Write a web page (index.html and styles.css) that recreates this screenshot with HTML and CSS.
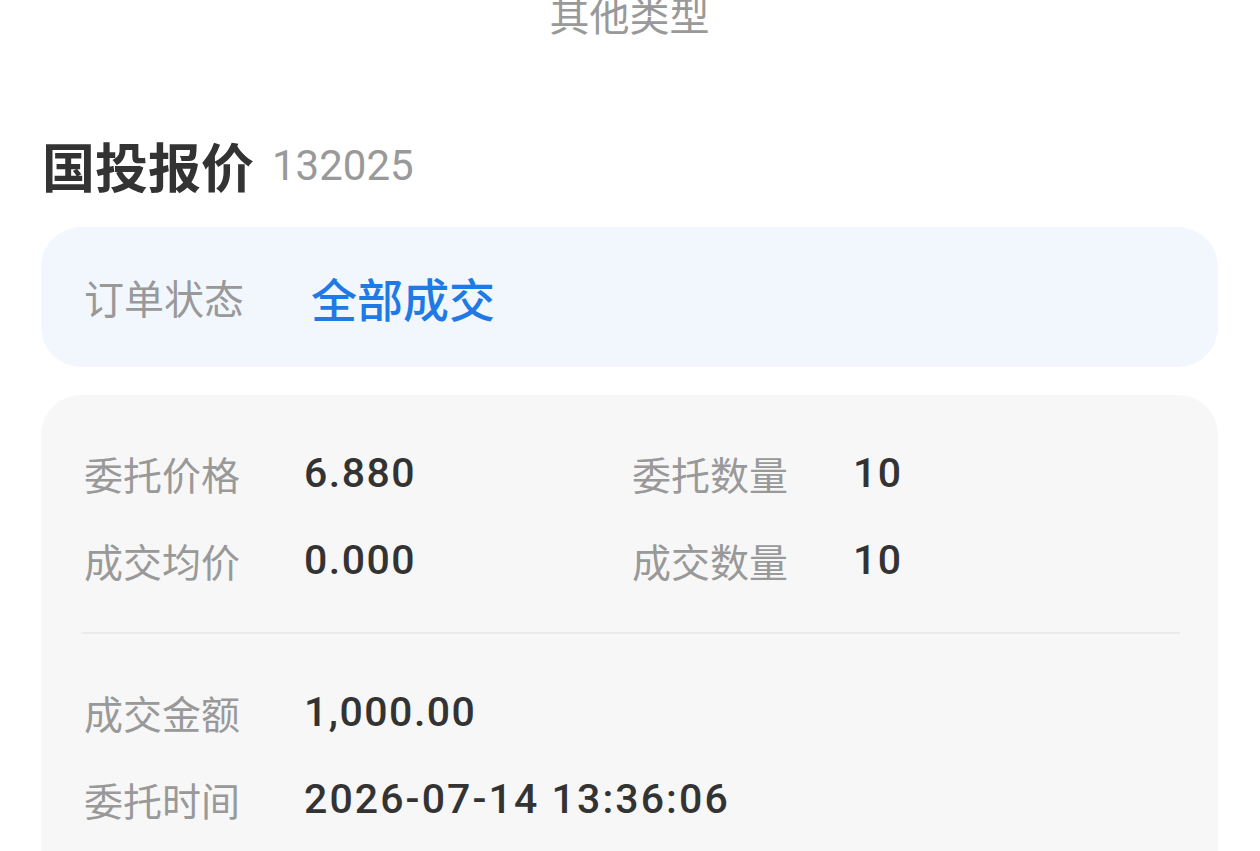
FILE: index.html
```html
<!DOCTYPE html>
<html lang="zh-CN">
<head>
<meta charset="utf-8">
<title>国投报价</title>
<link rel="stylesheet" href="styles.css">
</head>
<body>
<div class="page">
  <div class="top-type">其他类型</div>
  <h1 class="title"><span class="name">国投报价</span><span class="code">132025</span></h1>
  <div class="status-card">
    <span class="status-label">订单状态</span>
    <span class="status-value">全部成交</span>
  </div>
  <div class="detail-card">
    <div class="grid">
      <span class="label">委托价格</span><span class="value">6.880</span>
      <span class="label">委托数量</span><span class="value">10</span>
      <span class="label">成交均价</span><span class="value">0.000</span>
      <span class="label">成交数量</span><span class="value">10</span>
    </div>
    <div class="divider"></div>
    <div class="list">
      <div class="row"><span class="label">成交金额</span><span class="value">1,000.00</span></div>
      <div class="row"><span class="label">委托时间</span><span class="value">2026-07-14 13:36:06</span></div>
    </div>
  </div>
</div>
</body>
</html>
```

FILE: styles.css
```css
* { box-sizing: border-box; }
html, body {
  margin: 0;
  padding: 0;
  background: #ffffff;
  overflow: hidden;
}
body {
  font-family: "Noto Sans CJK SC", "Noto Sans", sans-serif;
  color: #333333;
}
.page {
  padding: 0 42px 0 41px;
}
.top-type {
  height: 40px;
  line-height: 40px;
  margin-top: -6px;
  font-size: 40px;
  color: #999999;
  text-align: center;
}
.title {
  margin: 101px 0 0 0;
  height: 60px;
  line-height: 60px;
  display: flex;
  align-items: center;
  padding-left: 1px;
}
.title .name {
  font-size: 53px;
  font-weight: 700;
  color: #333333;
}
.title .code {
  font-family: Roboto, "Noto Sans", sans-serif;
  font-size: 42px;
  font-weight: 400;
  color: #999999;
  margin-left: 18px;
  margin-top: 2px;
}
.status-card {
  margin-top: 32px;
  height: 140px;
  border-radius: 40px;
  background: #f2f7fd;
  display: flex;
  align-items: center;
  padding-left: 41px;
}
.status-label {
  width: 229px;
  font-size: 40px;
  color: #999999;
  padding-left: 2px;
}
.status-value {
  font-size: 46px;
  font-weight: 500;
  color: #1f7ae6;
}
.detail-card {
  margin-top: 28px;
  height: 480px;
  border-radius: 40px 40px 0 0;
  background: #f7f7f7;
  padding: 34px 38px 0 41px;
}
.grid {
  display: grid;
  grid-template-columns: 222px 326px 223px 1fr;
  grid-auto-rows: 87px;
  align-items: center;
}
.label {
  font-size: 39px;
  color: #999999;
  padding-left: 2px;
}
.value {
  font-family: Roboto, "Noto Sans", sans-serif;
  font-size: 41px;
  font-weight: 500;
  color: #333333;
  letter-spacing: 1.5px;
}
.row .value.time {
  letter-spacing: 2px;
}
.divider {
  margin-top: 29px;
  height: 2px;
  background: #ebebeb;
}
.list {
  margin-top: 34px;
}
.row {
  display: flex;
  align-items: center;
  height: 87px;
}
.row .label {
  width: 222px;
}
.row:last-child .value {
  letter-spacing: 2.1px;
}
```
